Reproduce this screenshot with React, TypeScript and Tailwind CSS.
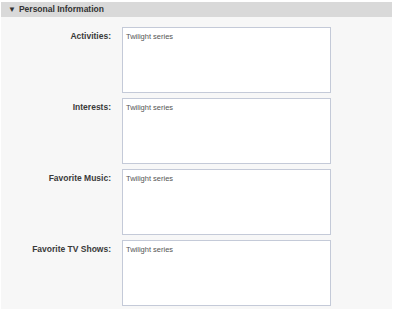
const fields = [
  { label: "Activities:", value: "Twilight series" },
  { label: "Interests:", value: "Twilight series" },
  { label: "Favorite Music:", value: "Twilight series" },
  { label: "Favorite TV Shows:", value: "Twilight series" },
];

const FieldRow = ({ label, value }: { label: string; value: string }) => {
  return (
    <div className="flex flex-row items-start">
      <div className="w-[110px] pt-[4px] text-right text-[8.5px] font-bold text-[#3a3a3a] leading-[10px]">
        {label}
      </div>
      <div className="ml-[11px] w-[209px] h-[66px] bg-white border border-[#c4cad8] px-[3px] pt-[4px] text-[7.5px] text-[#555555] leading-[10px]">
        {value}
      </div>
    </div>
  );
};

const App = () => {
  return (
    <div
      className="w-[400px] h-[309px] bg-white pt-[2px] pl-[1px] overflow-hidden"
      style={{ fontFamily: '"Liberation Sans", Arial, sans-serif' }}
    >
      <div className="w-[391px] h-[307px] bg-[#f7f7f7]">
        {/* Header */}
        <div className="h-[15px] bg-[#d9d9d9] flex items-center pl-[7px] text-[8.5px] font-bold text-[#333333]">
          <span className="text-[8px] mr-[3px]">▼</span>
          Personal Information
        </div>

        {/* Fields */}
        <div className="flex flex-col gap-[5px] pt-[10px]">
          {fields.map((f) => (
            <FieldRow key={f.label} label={f.label} value={f.value} />
          ))}
        </div>
      </div>
    </div>
  );
};

export default App;
